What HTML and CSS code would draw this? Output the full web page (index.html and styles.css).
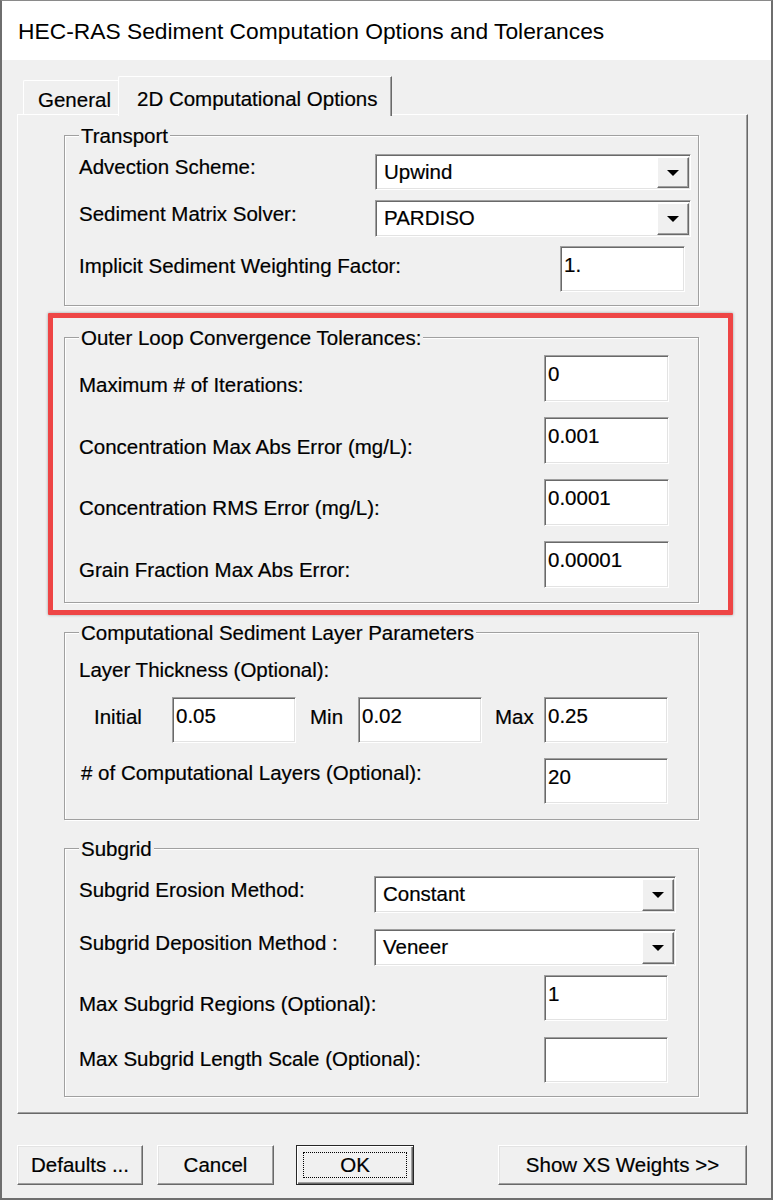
FILE: index.html
```html
<!DOCTYPE html>
<html>
<head>
<meta charset="utf-8">
<title>HEC-RAS Sediment Computation Options and Tolerances</title>
<link rel="stylesheet" href="styles.css">
</head>
<body>
<div class="window">
  <div class="titlebar">HEC-RAS Sediment Computation Options and Tolerances</div>
  <div class="body">
    <div class="tabs">
      <div class="tab">General</div>
      <div class="tab tab-active">2D Computational Options</div>
    </div>
    <div class="panel">
      <div class="group g-transport">
        <div class="group-title">Transport</div>
        <div class="row mt6">
          <span class="label lm1">Advection Scheme:</span>
          <div class="combo combo-t h36"><span class="combo-text">Upwind</span><span class="dd"><svg width="12" height="6" viewBox="0 0 12 6"><polygon points="0,0 12,0 6,6" fill="#000"/></svg></span></div>
        </div>
        <div class="row mt10">
          <span class="label lm2">Sediment Matrix Solver:</span>
          <div class="combo combo-t"><span class="combo-text">PARDISO</span><span class="dd"><svg width="12" height="6" viewBox="0 0 12 6"><polygon points="0,0 12,0 6,6" fill="#000"/></svg></span></div>
        </div>
        <div class="row mt9">
          <span class="label lm8">Implicit Sediment Weighting Factor:</span>
          <div class="field field-t h46">1.</div>
        </div>
      </div>

      <div class="highlight">
        <div class="group g-outer">
          <div class="group-title">Outer Loop Convergence Tolerances:</div>
          <div class="row mt5">
            <span class="label lm18">Maximum # of Iterations:</span>
            <div class="field field-o">0</div>
          </div>
          <div class="row mt15">
            <span class="label lm18">Concentration Max Abs Error (mg/L):</span>
            <div class="field field-o">0.001</div>
          </div>
          <div class="row mt15">
            <span class="label lm17">Concentration RMS Error (mg/L):</span>
            <div class="field field-o">0.0001</div>
          </div>
          <div class="row mt15">
            <span class="label lm17">Grain Fraction Max Abs Error:</span>
            <div class="field field-o">0.00001</div>
          </div>
        </div>
      </div>

      <div class="group g-layers">
        <div class="group-title">Computational Sediment Layer Parameters</div>
        <div class="text-line mt13">Layer Thickness (Optional):</div>
        <div class="thick mt15">
          <span class="tl tl-initial">Initial</span>
          <div class="field field-s h46">0.05</div>
          <span class="tl tl-min">Min</span>
          <div class="field field-s h46">0.02</div>
          <span class="tl tl-max">Max</span>
          <div class="field field-s h46">0.25</div>
        </div>
        <div class="row mt15">
          <span class="label lm3 indent2">&#35; of Computational Layers (Optional):</span>
          <div class="field field-s field-r h46">20</div>
        </div>
      </div>

      <div class="group g-subgrid">
        <div class="group-title">Subgrid</div>
        <div class="row mt15">
          <span class="label lm2">Subgrid Erosion Method:</span>
          <div class="combo combo-s"><span class="combo-text">Constant</span><span class="dd"><svg width="12" height="6" viewBox="0 0 12 6"><polygon points="0,0 12,0 6,6" fill="#000"/></svg></span></div>
        </div>
        <div class="row mt16">
          <span class="label lm2">Subgrid Deposition Method :</span>
          <div class="combo combo-s"><span class="combo-text">Veneer</span><span class="dd"><svg width="12" height="6" viewBox="0 0 12 6"><polygon points="0,0 12,0 6,6" fill="#000"/></svg></span></div>
        </div>
        <div class="row mt9">
          <span class="label lm17">Max Subgrid Regions (Optional):</span>
          <div class="field field-s field-r h46">1</div>
        </div>
        <div class="row mt16">
          <span class="label lm10">Max Subgrid Length Scale (Optional):</span>
          <div class="field field-s field-r h46"></div>
        </div>
      </div>
    </div>

    <div class="buttons">
      <button class="btn btn-defaults">Defaults ...</button>
      <button class="btn btn-cancel">Cancel</button>
      <button class="btn btn-ok"><span class="focus">OK</span></button>
      <button class="btn btn-xs">Show XS Weights &gt;&gt;</button>
    </div>
  </div>
</div>
</body>
</html>
```

FILE: styles.css
```css
* { box-sizing: border-box; }

body {
  margin: 0;
  background: #ffffff;
  font-family: "Liberation Sans", Arial, sans-serif;
  font-size: 20.5px;
  color: #000;
  -webkit-text-stroke: 0.2px #000;
}

.window {
  width: 773px;
  height: 1200px;
  border: 2px solid #6e6e6e;
  border-top: 1px solid #8a8a8a;
  background: #f0f0f0;
}

.titlebar {
  height: 59px;
  background: #ffffff;
  padding: 2px 0 0 16px;
  line-height: 57px;
  font-size: 22.8px;
  white-space: nowrap;
  -webkit-text-stroke: 0;
}

.body {
  padding: 16px 0 0 15px;
}

/* Tabs */
.tabs {
  display: flex;
  align-items: flex-end;
  height: 38px;
  padding-left: 6px;
}

.tab {
  height: 34px;
  width: 95px;
  border-top: 1px solid #fff;
  border-left: 1px solid #fff;
  border-top-left-radius: 2px;
  padding: 7px 0 0 14px;
  line-height: 24px;
  white-space: nowrap;
}

.tab-active {
  position: relative;
  z-index: 1;
  height: 40px;
  width: 274px;
  margin-bottom: -2px;
  padding: 10px 0 0 18px;
  border-right: 1px solid #696969;
  box-shadow: inset -1px 0 0 #a0a0a0;
  background: #f0f0f0;
}

/* Tab panel */
.panel {
  width: 731px;
  border-top: 1px solid #fff;
  border-left: 1px solid #fff;
  border-right: 1px solid #696969;
  border-bottom: 1px solid #696969;
  box-shadow: inset -1px -1px 0 #a0a0a0;
  padding: 20px 0 16px 46px;
}

/* Group boxes */
.group {
  width: 635px;
  border: 1px solid #a0a0a0;
  box-shadow: inset 1px 1px 0 #fff, 1px 1px 0 #fff;
  padding: 0 0 0 14px;
}

.g-transport { padding-bottom: 13px; }
.g-outer { padding-bottom: 14px; }
.g-layers { margin-top: 17px; padding-bottom: 15px; }
.g-subgrid { margin-top: 28px; padding-bottom: 13px; }

.group-title {
  width: fit-content;
  margin-top: -12px;
  padding: 0 2px;
  background: #f0f0f0;
  line-height: 24px;
  white-space: nowrap;
}

.highlight {
  width: 685px;
  margin: 7px 0 0 -16px;
  border: 5px solid #ee4545;
  border-radius: 1px;
  box-shadow: 0 0 3px rgba(0, 0, 0, 0.35);
  padding: 19px 29px 7px 11px;
}

/* Rows */
.row {
  display: flex;
  align-items: flex-start;
}

.label {
  flex: 1;
  line-height: 24px;
  white-space: nowrap;
}

.indent2 { padding-left: 2px; }

.text-line { line-height: 24px; }

.mt5 { margin-top: 5px; }
.mt6 { margin-top: 6px; }
.mt9 { margin-top: 9px; }
.mt10 { margin-top: 10px; }
.mt13 { margin-top: 13px; }
.mt15 { margin-top: 15px; }
.mt16 { margin-top: 16px; }

.lm1 { margin-top: 1px; }
.lm2 { margin-top: 2px; }
.lm3 { margin-top: 3px; }
.lm8 { margin-top: 8px; }
.lm10 { margin-top: 10px; }
.lm17 { margin-top: 17px; }
.lm18 { margin-top: 18px; }

/* Sunken controls */
.combo,
.field {
  background: #fff;
  border: 1px solid;
  border-color: #a0a0a0 #fff #fff #a0a0a0;
  box-shadow: inset 1px 1px 0 #696969, inset -1px -1px 0 #e3e3e3;
}

.combo {
  display: flex;
  height: 37px;
}

.combo-text {
  flex: 1;
  padding: 5px 0 0 8px;
  line-height: 24px;
}

.dd {
  width: 32px;
  margin: 2px 1px 1px 0;
  display: flex;
  align-items: center;
  justify-content: center;
  background: #f0f0f0;
  border: 1px solid;
  border-color: #fff #696969 #696969 #fff;
  box-shadow: inset -1px -1px 0 #a0a0a0;
}

.combo-t { width: 316px; margin-right: 7px; }
.combo-s { width: 302px; margin-right: 22px; }

.field {
  height: 47px;
  padding: 6px 3px 0;
  line-height: 24px;
}

.h36 { height: 36px; }
.h46 { height: 46px; }

.field-t { width: 125px; margin-right: 13px; }
.field-o { width: 125px; margin-right: 29px; }
.field-s { width: 124px; }
.field-r { margin-right: 30px; }

/* Layer thickness row */
.thick {
  display: flex;
  align-items: flex-start;
  padding-left: 15px;
}

.tl {
  margin-top: 8px;
  line-height: 24px;
}

.tl-initial { width: 78px; }
.tl-min { width: 48px; margin-left: 14px; }
.tl-max { width: 49px; margin-left: 13px; }

/* Buttons */
.buttons {
  display: flex;
  margin-top: 31px;
}

.btn {
  height: 40px;
  padding: 0;
  font: inherit;
  color: #000;
  background: #f0f0f0;
  border: 1px solid;
  border-color: #fff #696969 #696969 #fff;
  box-shadow: inset -1px -1px 0 #a0a0a0, inset 1px 1px 0 #e3e3e3;
  line-height: 24px;
  text-align: center;
  white-space: nowrap;
}

.btn-defaults { width: 126px; }
.btn-cancel { width: 117px; margin-left: 14px; }
.btn-ok {
  width: 118px;
  margin-left: 22px;
  border-color: #262626;
  box-shadow: inset 1px 1px 0 #fff, inset -1px -1px 0 #696969, inset -2px -2px 0 #a0a0a0;
}
.btn-xs { width: 249px; margin-left: 84px; }

.focus {
  display: block;
  width: 104px;
  height: 26px;
  margin: 0 auto;
  border: 1px dotted #000;
  line-height: 24px;
}
```
